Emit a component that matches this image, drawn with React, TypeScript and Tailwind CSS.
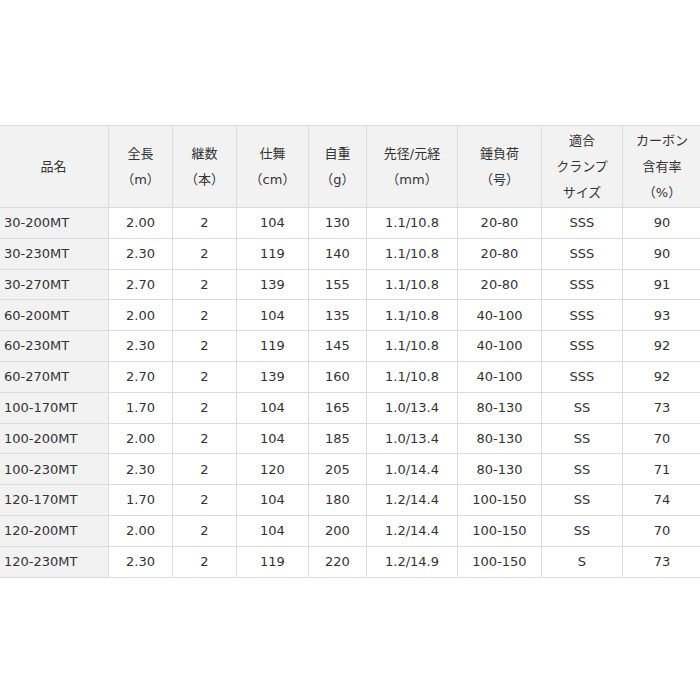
const headers: string[][] = [
  ["品名"],
  ["全長", "（m）"],
  ["継数", "（本）"],
  ["仕舞", "（cm）"],
  ["自重", "（g）"],
  ["先径/元経", "（mm）"],
  ["錘負荷", "（号）"],
  ["適合", "クランプ", "サイズ"],
  ["カーボン", "含有率", "（%）"],
];

const rows: string[][] = [
  ["30-200MT", "2.00", "2", "104", "130", "1.1/10.8", "20-80", "SSS", "90"],
  ["30-230MT", "2.30", "2", "119", "140", "1.1/10.8", "20-80", "SSS", "90"],
  ["30-270MT", "2.70", "2", "139", "155", "1.1/10.8", "20-80", "SSS", "91"],
  ["60-200MT", "2.00", "2", "104", "135", "1.1/10.8", "40-100", "SSS", "93"],
  ["60-230MT", "2.30", "2", "119", "145", "1.1/10.8", "40-100", "SSS", "92"],
  ["60-270MT", "2.70", "2", "139", "160", "1.1/10.8", "40-100", "SSS", "92"],
  ["100-170MT", "1.70", "2", "104", "165", "1.0/13.4", "80-130", "SS", "73"],
  ["100-200MT", "2.00", "2", "104", "185", "1.0/13.4", "80-130", "SS", "70"],
  ["100-230MT", "2.30", "2", "120", "205", "1.0/14.4", "80-130", "SS", "71"],
  ["120-170MT", "1.70", "2", "104", "180", "1.2/14.4", "100-150", "SS", "74"],
  ["120-200MT", "2.00", "2", "104", "200", "1.2/14.4", "100-150", "SS", "70"],
  ["120-230MT", "2.30", "2", "119", "220", "1.2/14.9", "100-150", "S", "73"],
];

const widths = [110, 64, 64, 72, 58, 91, 84, 81, 79];

export default function App() {
  return (
    <div
      className="w-[700px] h-[700px] overflow-hidden bg-white text-[#333] text-[13px]"
      style={{ fontFamily: "'DejaVu Sans', 'Noto Sans CJK JP', sans-serif" }}
    >
      <table className="mt-[125px] ml-[-2px] w-[703px] table-fixed border-collapse">
        <colgroup>
          {widths.map((w, i) => (
            <col key={i} style={{ width: w }} />
          ))}
        </colgroup>
        <thead>
          <tr className="h-[82px] bg-[#f2f2f2]">
            {headers.map((h, i) => (
              <th
                key={i}
                className="border border-[#dcdcdc] font-normal text-center align-middle leading-[26px] p-0"
              >
                {h.map((line, j) => (
                  <div key={j}>{line}</div>
                ))}
              </th>
            ))}
          </tr>
        </thead>
        <tbody>
          {rows.map((r, i) => (
            <tr key={i} className="h-[30.8px]">
              {r.map((c, j) => (
                <td
                  key={j}
                  className={
                    j === 0
                      ? "border border-[#dcdcdc] bg-[#f2f2f2] text-left pl-[5px] p-0 align-middle"
                      : "border border-[#dcdcdc] text-center p-0 align-middle"
                  }
                >
                  {c}
                </td>
              ))}
            </tr>
          ))}
        </tbody>
      </table>
    </div>
  );
}
